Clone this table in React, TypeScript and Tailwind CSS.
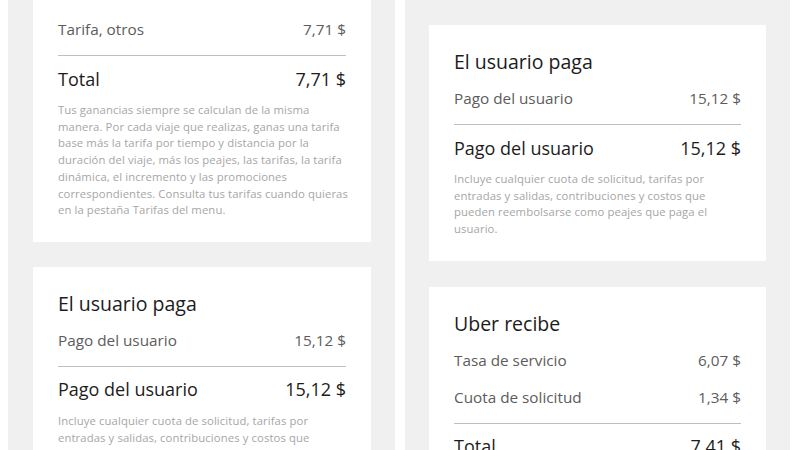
const font = { fontFamily: '"Open Sans", "Noto Sans", sans-serif' };

type Row = { label: string; value: string };

function Card({
  title,
  rows,
  total,
  note,
  className = '',
}: {
  title: string;
  rows: Row[];
  total: Row;
  note?: string[];
  className?: string;
}) {
  return (
    <div className={`bg-white px-[25px] pt-[18px] pb-[23px] shrink-0 ${className}`}>
      <div className="h-[37px] flex items-center text-[19.5px] text-[#1c1c1c]">{title}</div>
      {rows.map((r) => (
        <div key={r.label} className="h-[37px] flex items-center justify-between text-[15.3px] text-[#5c5c5c]">
          <span>{r.label}</span>
          <span>{r.value}</span>
        </div>
      ))}
      <div className="mt-[7px] h-px bg-[#bfbfbf]" />
      <div className="h-[46px] flex items-center justify-between text-[18px] text-[#1c1c1c]">
        <span>{total.label}</span>
        <span>{total.value}</span>
      </div>
      {note && (
        <p className="text-[11.3px] leading-[16.7px] tracking-[0.1px] text-[#a6a6a6]">
          {note.map((line, i) => (
            <span key={i} className="block whitespace-nowrap">
              {line}
            </span>
          ))}
        </p>
      )}
    </div>
  );
}

const userNote = [
  'Incluye cualquier cuota de solicitud, tarifas por',
  'entradas y salidas, contribuciones y costos que',
  'pueden reembolsarse como peajes que paga el',
  'usuario.',
];

export default function App() {
  return (
    <div style={font} className="w-[800px] h-[450px] overflow-hidden bg-white flex pl-[8px] gap-[10px]">
      {/* Left phone */}
      <div className="w-[387px] h-full bg-[#f0f0f0] pl-[25px] pr-[24px] flex flex-col gap-[25px]">
        <Card
          className="-mt-[44px]"
          title="Recibes"
          rows={[{ label: 'Tarifa, otros', value: '7,71 $' }]}
          total={{ label: 'Total', value: '7,71 $' }}
          note={[
            'Tus ganancias siempre se calculan de la misma',
            'manera. Por cada viaje que realizas, ganas una tarifa',
            'base más la tarifa por tiempo y distancia por la',
            'duración del viaje, más los peajes, las tarifas, la tarifa',
            'dinámica, el incremento y las promociones',
            'correspondientes. Consulta tus tarifas cuando quieras',
            'en la pestaña Tarifas del menu.',
          ]}
        />
        <Card
          title="El usuario paga"
          rows={[{ label: 'Pago del usuario', value: '15,12 $' }]}
          total={{ label: 'Pago del usuario', value: '15,12 $' }}
          note={userNote}
        />
      </div>

      {/* Right phone */}
      <div className="w-[385px] h-full bg-[#f0f0f0] px-[24px] pt-[25px] flex flex-col gap-[26px]">
        <Card
          title="El usuario paga"
          rows={[{ label: 'Pago del usuario', value: '15,12 $' }]}
          total={{ label: 'Pago del usuario', value: '15,12 $' }}
          note={userNote}
        />
        <Card
          title="Uber recibe"
          rows={[
            { label: 'Tasa de servicio', value: '6,07 $' },
            { label: 'Cuota de solicitud', value: '1,34 $' },
          ]}
          total={{ label: 'Total', value: '7,41 $' }}
        />
      </div>
    </div>
  );
}
